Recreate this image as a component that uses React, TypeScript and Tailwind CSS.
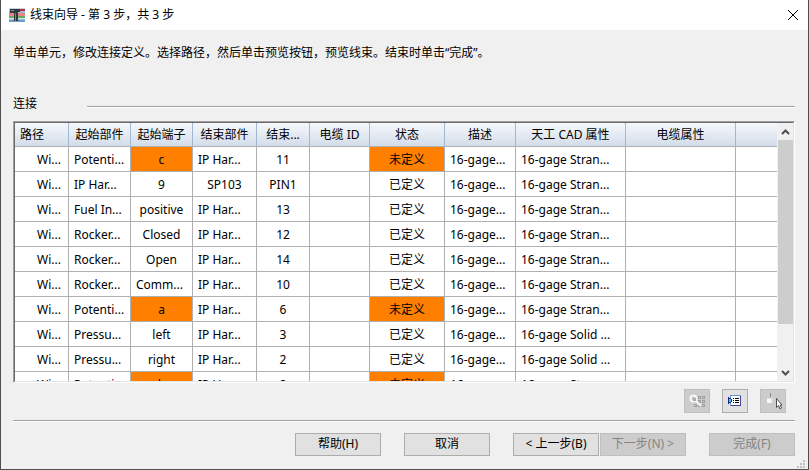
import React from 'react';
import clsx from 'clsx';

interface Connection {
  from: string;
  fromPin: string;
  to: string;
  toPin: string;
  defined: boolean;
  desc: string;
  cad: string;
}

const GAGE = '16-gage...';
const STRAN = '16-gage Stran...';
const SOLID = '16-gage Solid ...';

const CONNECTIONS: Connection[] = [
  { from: 'Potenti...', fromPin: 'c', to: 'IP Har...', toPin: '11', defined: false, desc: GAGE, cad: STRAN },
  { from: 'IP Har...', fromPin: '9', to: 'SP103', toPin: 'PIN1', defined: true, desc: GAGE, cad: STRAN },
  { from: 'Fuel In...', fromPin: 'positive', to: 'IP Har...', toPin: '13', defined: true, desc: GAGE, cad: STRAN },
  { from: 'Rocker...', fromPin: 'Closed', to: 'IP Har...', toPin: '12', defined: true, desc: GAGE, cad: STRAN },
  { from: 'Rocker...', fromPin: 'Open', to: 'IP Har...', toPin: '14', defined: true, desc: GAGE, cad: STRAN },
  { from: 'Rocker...', fromPin: 'Comm...', to: 'IP Har...', toPin: '10', defined: true, desc: GAGE, cad: STRAN },
  { from: 'Potenti...', fromPin: 'a', to: 'IP Har...', toPin: '6', defined: false, desc: GAGE, cad: STRAN },
  { from: 'Pressu...', fromPin: 'left', to: 'IP Har...', toPin: '3', defined: true, desc: GAGE, cad: SOLID },
  { from: 'Pressu...', fromPin: 'right', to: 'IP Har...', toPin: '2', defined: true, desc: GAGE, cad: SOLID },
  { from: 'Potenti...', fromPin: 'b', to: 'IP Har...', toPin: '8', defined: false, desc: GAGE, cad: STRAN },
];

const COLUMNS = [
  { title: '路径', width: 'w-[54px]' },
  { title: '起始部件', width: 'w-[62px]' },
  { title: '起始端子', width: 'w-[62px]' },
  { title: '结束部件', width: 'w-[64px]' },
  { title: '结束...', width: 'w-[53px]' },
  { title: '电缆 ID', width: 'w-[60px]' },
  { title: '状态', width: 'w-[75px]' },
  { title: '描述', width: 'w-[71px]' },
  { title: '天工 CAD 属性', width: 'w-[110px]' },
  { title: '电缆属性', width: 'w-[110px]' },
];

const Cell: React.FC<{ text?: string; warn?: boolean }> = ({ text = '', warn }) => (
  <td
    className={clsx(
      'border-r border-b border-[#b0b0b0] p-0 pt-[2px] whitespace-nowrap',
      text.endsWith('...') ? 'pl-[5px] text-left' : 'text-center',
      warn && 'bg-[#ff8000]'
    )}
  >
    {text}
  </td>
);

const Divider = () => <div className="h-[2px] flex-1 border-t border-[#a0a0a0] bg-white" />;

const WizardButton: React.FC<{ label: string; disabled?: boolean }> = ({ label, disabled }) => (
  <button
    type="button"
    disabled={disabled}
    className="h-[23px] w-[86px] border border-[#adadad] bg-[#e1e1e1] pb-[2px] leading-4 whitespace-nowrap disabled:border-[#bfbfbf] disabled:bg-[#cccccc] disabled:text-[#838383]"
  >
    {label}
  </button>
);

const ToolButton: React.FC<{ label: string; disabled?: boolean; children: React.ReactNode }> = ({ label, disabled, children }) => (
  <button
    type="button"
    aria-label={label}
    disabled={disabled}
    className="flex h-6 w-[26px] items-center justify-center border border-[#adadad] bg-[#e1e1e1] disabled:border-[#bfbfbf] disabled:bg-[#cccccc]"
  >
    {children}
  </button>
);

const AppIcon = () => (
  <svg width="16" height="14" viewBox="0 0 16 14" shapeRendering="crispEdges">
    <rect width="16" height="14" fill="#9dbbd3" />
    <rect x="0" y="0" width="16" height="2" fill="#c4d4e2" />
    <rect x="11" y="1" width="5" height="2" fill="#b8323c" />
    <rect x="0" y="5" width="16" height="3" fill="#e88484" />
    <rect x="0" y="8" width="16" height="2" fill="#63a863" />
    <rect x="0" y="10" width="16" height="1" fill="#d4e4f0" />
    <rect x="0" y="12" width="16" height="2" fill="#6f9cc4" />
    <path d="M1 1h10v3H9v9H5V5H1z" fill="#33383c" />
    <path d="M6 5h1v8H6z" fill="#7c8488" />
    <path d="M2 2h3v1H2z" fill="#8a9296" />
  </svg>
);

const SearchGridIcon = () => (
  <svg width="16" height="14" viewBox="0 0 16 14" fill="none" shapeRendering="crispEdges">
    <path d="M9.500 2.500h2v2h-2zM13.500 2.500h2v2h-2zM9.500 6.500h2v2h-2zM13.500 6.500h2v2h-2zM5.500 10.500h2v2h-2zM9.500 10.500h2v2h-2zM13.500 10.500h2v2h-2z" stroke="#a0a0a0" />
    <circle cx="4.500" cy="4.500" r="3" fill="#c8c8c8" stroke="#f8f8f8" strokeWidth="2" shapeRendering="auto" />
    <path d="M7 7l5 5" stroke="#f8f8f8" strokeWidth="2" shapeRendering="auto" />
    <path d="M4 4h2v2H4z" stroke="#a8a8a8" />
  </svg>
);

const ListIcon = () => (
  <svg width="14" height="12" viewBox="0 0 14 12" fill="none" shapeRendering="crispEdges">
    <rect x="2.500" y="0.500" width="10" height="10" fill="#fff" stroke="#6a96d0" />
    <path d="M12.500 1v10M3 10.500h10" stroke="#42429a" />
    <path d="M5 3h1v1H5zM7 3h4v1H7zM5 5h1v1H5zM7 5h4v1H7zM5 7h1v1H5zM7 7h4v1H7z" fill="#000" />
    <path d="M0 2h1v1h2v1h1v3H3v1H1v1H0z" fill="#22228a" />
    <path d="M1 4h2v3H1z" fill="#3ec8d8" />
  </svg>
);

const PickIcon = () => (
  <svg width="18" height="18" viewBox="0 0 18 18">
    <path d="M6 1h1v4H6z" fill="#8a8a8a" />
    <path d="M3 6h6v5H3z" fill="#dedede" />
    <path d="M3 7h4v4H3z" fill="#f8f8f8" />
    <path d="M12.500 6.500v9l2-2 1.500 3.500 1.500-1-1.500-3h2z" fill="#fff" stroke="#505050" />
  </svg>
);

const Chevron: React.FC<{ down?: boolean }> = ({ down }) => (
  <svg width="9" height="6" viewBox="0 0 9 6" className={clsx(down && 'rotate-180')}>
    <path d="M1 5l3.500-3.500L8 5" fill="none" stroke="#505050" strokeWidth="2" />
  </svg>
);

const SizeGrip = () => (
  <svg width="8" height="8" viewBox="0 0 8 8" className="absolute right-[3px] bottom-[1px]" shapeRendering="crispEdges">
    <path d="M6 0h2v2H6zM3 3h2v2H3zM6 3h2v2H6zM0 6h2v2H0zM3 6h2v2H3zM6 6h2v2H6z" fill="#bfbfbf" />
  </svg>
);

const Scrollbar = () => (
  <div className="flex w-4 shrink-0 flex-col bg-[#f0f0f0] pl-px">
    <button type="button" aria-label="向上滚动" className="flex h-[17px] items-center justify-center">
      <Chevron />
    </button>
    <div className="flex-1">
      <div className="h-[82%] bg-[#cdcdcd]" />
    </div>
    <button type="button" aria-label="向下滚动" className="flex h-[17px] items-center justify-center">
      <Chevron down />
    </button>
  </div>
);

const ConnectionTable = () => (
  <table className="w-full table-fixed border-separate border-spacing-0 bg-white">
    <colgroup>
      {COLUMNS.map((col) => (
        <col key={col.title} className={col.width} />
      ))}
      <col />
    </colgroup>
    <thead>
      <tr className="h-6">
        {COLUMNS.map((col, idx) => (
          <th
            key={col.title}
            className={clsx(
              'border-r border-b border-r-[#a0b8d0] border-b-[#b0b0b0] bg-linear-to-b from-[#f6f9fc] to-[#d3dce9] p-0 font-normal whitespace-nowrap',
              idx === 0 ? 'pl-[5px] text-left' : 'text-center'
            )}
          >
            {col.title}
          </th>
        ))}
        <td className="border-b border-[#b0b0b0] bg-linear-to-b from-[#f6f9fc] to-[#d3dce9] p-0" />
      </tr>
    </thead>
    <tbody>
      {CONNECTIONS.map((row, idx) => (
        <tr key={idx} className="h-[25px]">
          <td className="border-r border-b border-[#b0b0b0] p-0 pt-[2px] pr-[7px] text-right">Wi...</td>
          <Cell text={row.from} />
          <Cell text={row.fromPin} warn={!row.defined} />
          <Cell text={row.to} />
          <Cell text={row.toPin} />
          <Cell />
          <Cell text={row.defined ? '已定义' : '未定义'} warn={!row.defined} />
          <Cell text={row.desc} />
          <Cell text={row.cad} />
          <Cell />
          <td className="border-b border-[#b0b0b0] p-0" />
        </tr>
      ))}
    </tbody>
  </table>
);

export default function App() {
  return (
    <div className="relative flex h-screen flex-col border-x border-b border-[#505050] bg-[#f0f0f0] font-['Noto_Sans','Noto_Sans_CJK_SC',sans-serif] text-[12px] leading-4 text-black">
      <header className="flex h-[30px] shrink-0 items-center gap-[5px] bg-white pr-[9px] pl-2">
        <AppIcon />
        <h1 className="flex-1">线束向导 - 第 3 步，共 3 步</h1>
        <button type="button" aria-label="关闭">
          <svg width="12" height="12" viewBox="0 0 12 12">
            <path d="M1 1l10 10M11 1L1 11" stroke="#000" />
          </svg>
        </button>
      </header>

      <main className="flex min-h-0 flex-1 flex-col pt-[15px] pr-[13px] pl-3">
        <p>单击单元，修改连接定义。选择路径，然后单击预览按钮，预览线束。结束时单击“完成”。</p>

        <div className="mt-[35px] flex items-end">
          <h2 className="w-[74px]">连接</h2>
          <div className="flex flex-1 pb-[4px]">
            <Divider />
          </div>
        </div>

        <div className="mt-[9px] flex min-h-0 flex-1 border border-t-[#a0a0a0] border-r-white border-b-white border-l-[#a0a0a0]">
          <div className="flex min-w-0 flex-1 overflow-hidden border border-t-[#696969] border-r-[#e3e3e3] border-b-[#e3e3e3] border-l-[#696969]">
            <div className="min-w-0 flex-1 overflow-hidden bg-white">
              <ConnectionTable />
            </div>
            <Scrollbar />
          </div>
        </div>

        <div className="mt-[6px] flex justify-end gap-3 pr-[9px]">
          <ToolButton label="查找" disabled>
            <SearchGridIcon />
          </ToolButton>
          <ToolButton label="预览">
            <ListIcon />
          </ToolButton>
          <ToolButton label="选择" disabled>
            <PickIcon />
          </ToolButton>
        </div>

        <div className="mt-[7px] flex">
          <Divider />
        </div>
      </main>

      <footer className="flex shrink-0 justify-end pt-[11px] pr-[13px] pb-[13px]">
        <div className="flex gap-[23px]">
          <WizardButton label="帮助(H)" />
          <WizardButton label="取消" />
          <div className="flex gap-px">
            <WizardButton label="< 上一步(B)" />
            <WizardButton label="下一步(N) >" disabled />
          </div>
          <WizardButton label="完成(F)" disabled />
        </div>
      </footer>
      <SizeGrip />
    </div>
  );
}
